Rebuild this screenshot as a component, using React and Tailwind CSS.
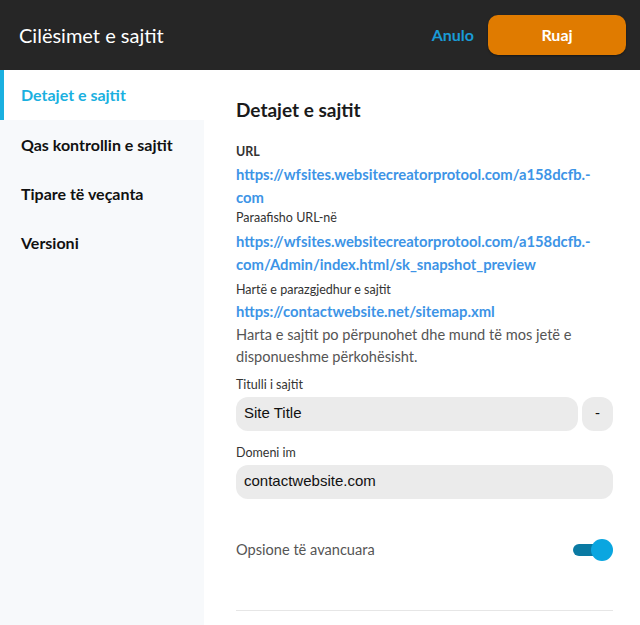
export default function App() {
  const menu = ["Qas kontrollin e sajtit", "Tipare të veçanta", "Versioni"];
  return (
    <div className="w-[640px] h-[625px] overflow-hidden bg-white font-['Lato',sans-serif]">
      <header className="h-[70px] bg-[#262626] flex items-center pl-[19px] pr-[14px]">
        <h1 className="text-white text-[20px] flex-1">Cilësimet e sajtit</h1>
        <button className="text-[#1a9bd6] font-bold text-[16px] mr-[14px]">Anulo</button>
        <button className="w-[138px] h-[40px] rounded-[10px] bg-[#e07b00] text-white font-bold text-[16px] shadow-[0_1px_2px_rgba(0,0,0,0.4)]">
          Ruaj
        </button>
      </header>
      <div className="flex h-[555px]">
        <nav className="w-[204px] bg-[#f7f9fb] shrink-0">
          <div className="h-[50px] bg-white border-l-4 border-[#1ab0e0] pl-[17px] flex items-center text-[#1ab0e0] font-bold text-[16px]">
            Detajet e sajtit
          </div>
          {menu.map((m) => (
            <div key={m} className="h-[49px] pl-[21px] flex items-center text-[#111] font-bold text-[16px]">
              {m}
            </div>
          ))}
        </nav>
        <main className="flex-1 pl-[32px] pr-[27px] pt-[26px]">
          <h2 className="text-[19px] font-bold text-[#1a1a1a] mb-[19px]">Detajet e sajtit</h2>
          <div className="text-[12.5px] font-bold text-[#333] leading-[16px]">URL</div>
          <a className="block text-[14.8px] font-bold text-[#3d94e6] leading-[23px] mt-[3px]">
            https://wfsites.websitecreatorprotool.com/a158dcfb.-
            <br />
            com
          </a>
          <div className="text-[12.5px] text-[#333] leading-[16px] mt-[1px]">Paraafisho URL-në</div>
          <a className="block text-[14.8px] font-bold text-[#3d94e6] leading-[23px] mt-[4px]">
            https://wfsites.websitecreatorprotool.com/a158dcfb.-
            <br />
            com/Admin/index.html/sk_snapshot_preview
          </a>
          <div className="text-[12.5px] text-[#333] leading-[16px] mt-[6px]">Hartë e parazgjedhur e sajtit</div>
          <a className="block text-[14.8px] font-bold text-[#3d94e6] leading-[23px] mt-[2px]">
            https://contactwebsite.net/sitemap.xml
          </a>
          <p className="text-[14.6px] text-[#555] leading-[22px] mt-[1px]">
            Harta e sajtit po përpunohet dhe mund të mos jetë e
            <br />
            disponueshme përkohësisht.
          </p>
          <div className="text-[12.5px] text-[#333] leading-[16px] mt-[9px]">Titulli i sajtit</div>
          <div className="flex gap-[4px] mt-[4px]">
            <div className="flex-1 h-[34px] rounded-[12px] bg-[#ebebeb] flex items-center px-[8px] text-[15px] text-[#111] font-['Liberation_Sans',sans-serif]">
              Site Title
            </div>
            <div className="w-[31px] h-[34px] rounded-[12px] bg-[#ebebeb] flex items-center justify-center text-[15px] text-[#111] font-['Liberation_Sans',sans-serif]">
              -
            </div>
          </div>
          <div className="text-[12.5px] text-[#333] leading-[16px] mt-[14px]">Domeni im</div>
          <div className="h-[34px] mt-[4px] rounded-[12px] bg-[#ebebeb] flex items-center px-[8px] text-[15px] text-[#111] font-['Liberation_Sans',sans-serif]">
            contactwebsite.com
          </div>
          <div className="flex items-center justify-between mt-[40px]">
            <span className="text-[14.6px] text-[#555]">Opsione të avancuara</span>
            <div className="relative w-[40px] h-[22px]">
              <div className="absolute left-0 right-[4px] top-[5px] h-[12px] rounded-full bg-[#0a7aa3]" />
              <div className="absolute right-0 top-0 w-[22px] h-[22px] rounded-full bg-[#0aa6e0]" />
            </div>
          </div>
          <div className="border-t border-[#e6e6e6] mt-[49px]" />
        </main>
      </div>
    </div>
  );
}
